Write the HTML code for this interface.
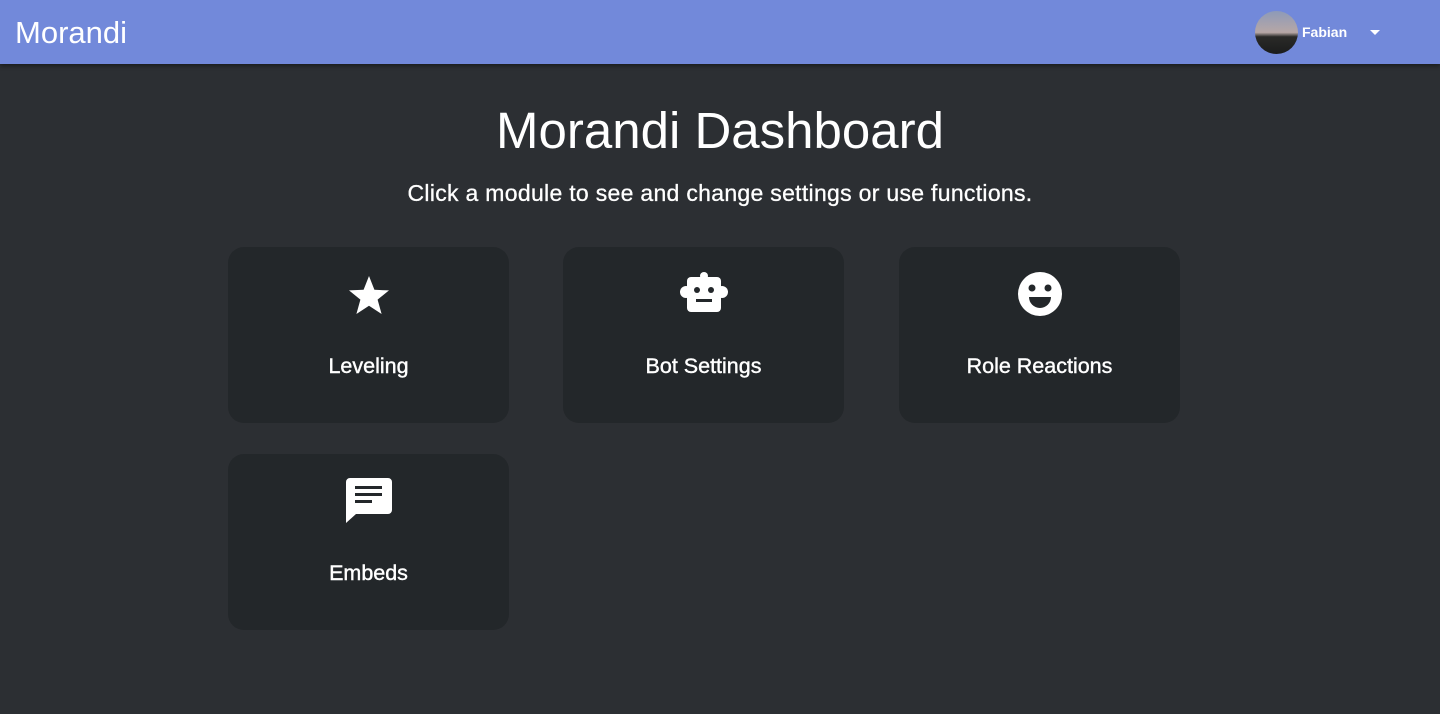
<!DOCTYPE html>
<html><head><meta charset="utf-8"><style>
*{box-sizing:border-box;margin:0;padding:0}
body{width:1440px;height:714px;background:#2c2f33;font-family:"Liberation Sans",sans-serif;color:#fff;overflow:hidden;position:relative}
.nav{position:absolute;left:0;top:0;width:1440px;height:64px;background:#7289da;box-shadow:0 2px 4px rgba(0,0,0,.4)}
.brand{position:absolute;left:15px;top:16px;font-size:31px;line-height:34px}
.av{position:absolute;left:1255px;top:11px;width:43px;height:43px;border-radius:50%;background:linear-gradient(#8d9ab8 0%,#b7a7a6 50%,#2a2a28 60%,#1b1c1c 100%)}
.user{position:absolute;left:1302px;top:24px;font-size:14px;font-weight:bold}
.caret{position:absolute;left:1370px;top:30px;border-left:5px solid transparent;border-right:5px solid transparent;border-top:5px solid #fff}
h1{position:absolute;top:101px;width:100%;text-align:center;font-weight:normal;font-size:51px;line-height:60px}
.sub{position:absolute;top:180px;width:100%;text-align:center;font-size:23px;line-height:26px;-webkit-text-stroke:0.3px #fff;letter-spacing:0.3px}
.card{position:absolute;width:281px;height:176px;background:#23272a;border-radius:16px}
.card svg{position:absolute;left:50%;transform:translateX(-50%);top:24px}
.card .l{position:absolute;top:107px;width:100%;text-align:center;font-size:21.5px;line-height:24px;-webkit-text-stroke:0.4px #fff}
</style></head><body>
<div class="nav"><div class="brand">Morandi</div><div class="av"></div><div class="user">Fabian</div><div class="caret"></div></div>
<h1>Morandi Dashboard</h1>
<div class="sub">Click a module to see and change settings or use functions.</div>
<div class="card" style="left:228px;top:247px"><svg width="48" height="48" viewBox="0 0 24 24"><path fill="#fff" d="M12 2.5l2.7 6.9 7.3.3-5.7 4.6 2 7.2L12 17.4l-6.3 4.1 2-7.2L2 9.7l7.3-.3z"/></svg><div class="l">Leveling</div></div>
<div class="card" style="left:563px;top:247px"><svg width="50" height="48" viewBox="0 0 50 48" style="top:23px"><g fill="#fff"><circle cx="25" cy="6" r="4"/><rect x="8" y="7" width="34" height="35" rx="4"/><circle cx="7" cy="22" r="6"/><circle cx="43" cy="22" r="6"/></g><circle cx="18" cy="20" r="3" fill="#23272a"/><circle cx="32" cy="20" r="3" fill="#23272a"/><rect x="17" y="29" width="16" height="3" fill="#23272a"/></svg><div class="l">Bot Settings</div></div>
<div class="card" style="left:899px;top:247px"><svg width="46" height="46" viewBox="0 0 46 46"><circle cx="23" cy="23" r="22" fill="#fff"/><circle cx="15" cy="17" r="3.5" fill="#23272a"/><circle cx="31" cy="17" r="3.5" fill="#23272a"/><path d="M12 26h22a11 11 0 0 1-22 0z" fill="#23272a"/></svg><div class="l">Role Reactions</div></div>
<div class="card" style="left:228px;top:454px"><svg width="46" height="46" viewBox="0 0 46 46"><path fill="#fff" d="M4 0h38a4 4 0 0 1 4 4v28a4 4 0 0 1-4 4H10L0 45V4a4 4 0 0 1 4-4z"/><rect x="9" y="8" width="27" height="3" fill="#23272a"/><rect x="9" y="15" width="27" height="3" fill="#23272a"/><rect x="9" y="22" width="17" height="3" fill="#23272a"/></svg><div class="l">Embeds</div></div>
</body></html>
